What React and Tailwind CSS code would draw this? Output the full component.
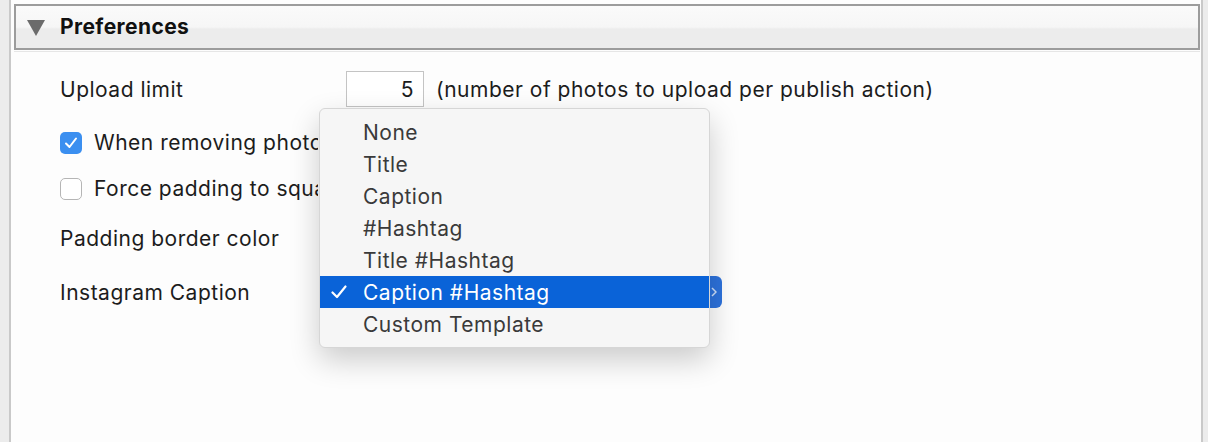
import React from "react";

const items = ["None", "Title", "Caption", "#Hashtag", "Title #Hashtag", "Caption #Hashtag", "Custom Template"];

export default function App() {
  return (
    <div
      className="relative flex h-[442px] w-[1208px] overflow-hidden bg-[#ececec] text-[#1c1c1c]"
      style={{ fontFamily: "Inter, 'Open Sans', sans-serif" }}
    >
      <div className="ml-[9px] flex w-[1194px] flex-col border-x-2 border-x-[#c9c9c9] bg-[#fdfdfd]">
        <div className="ml-[3px] mt-[4px] flex h-[46px] w-[1186px] items-center border-2 border-[#9c9c9c] bg-[linear-gradient(#fafafa,#f6f6f6_50%,#ececec_55%,#ececec)] pl-[10px]">
          <svg width="20" height="17" viewBox="0 0 20 17" className="mt-[1px]">
            <path d="M1 1 L19 1 L10 17 Z" fill="#6b6b6b" />
          </svg>
          <span className="ml-[14px] text-[21px] font-bold tracking-[0.4px] text-[#111]">Preferences</span>
        </div>
        <div className="ml-[3px] mt-[1px] h-px w-[1186px] bg-[#e6e6e6]" />

        <div className="flex flex-col pl-[49px] text-[21px] tracking-[0.5px]">
          <div className="mt-[19px] flex h-[36px] items-center">
            <span className="w-[286px] pt-[2px]">Upload limit</span>
            <div className="flex h-[36px] w-[78px] items-center justify-end border border-[#c4c4c4] bg-white pr-[9px] pt-[2px]">5</div>
            <span className="ml-[12px] pt-[2px]">(number of photos to upload per publish action)</span>
          </div>

          <div className="mt-[24px] flex h-[24px] items-center">
            <div className="flex h-[22px] w-[22px] shrink-0 items-center justify-center rounded-[5px] bg-[#3b8ff0]">
              <svg width="14" height="12" viewBox="0 0 14 12">
                <path d="M2 6.5 L5.5 10 L12 1.5" stroke="white" strokeWidth="2" fill="none" strokeLinecap="round" strokeLinejoin="round" />
              </svg>
            </div>
            <span className="ml-[12px] w-[224px] overflow-hidden whitespace-nowrap">When removing photos</span>
          </div>

          <div className="mt-[22px] flex h-[24px] items-center">
            <div className="h-[22px] w-[22px] shrink-0 rounded-[5px] border border-[#b5b5b5] bg-white" />
            <span className="ml-[12px] w-[224px] overflow-hidden whitespace-nowrap">Force padding to square</span>
          </div>

          <div className="mt-[26px] flex h-[24px] items-center">
            <span>Padding border color</span>
          </div>

          <div className="mt-[30px] flex h-[24px] items-center">
            <span>Instagram Caption</span>
          </div>
        </div>
      </div>

      <div className="absolute left-[690px] top-[276px] flex h-[32px] w-[32px] items-center justify-end rounded-[6px] bg-[#2d72dc] pr-[5px]">
        <svg width="6" height="12" viewBox="0 0 6 12">
          <path d="M1 2 L5 6 L1 10" stroke="#cfe0fb" strokeWidth="1.5" fill="none" />
        </svg>
      </div>

      <div className="absolute left-[319px] top-[108px] flex h-[240px] w-[391px] flex-col rounded-[6px] border border-[#d6d6d6] bg-[#f6f6f6] py-[7px] text-[21px] tracking-[0.5px] text-[#3a3a3a] shadow-[0_12px_30px_rgba(0,0,0,0.2)]">
        {items.map((it) => {
          const sel = it === "Caption #Hashtag";
          return (
            <div
              key={it}
              className={
                sel
                  ? "flex h-[32px] items-center bg-[#0a63d8] text-white"
                  : "flex h-[32px] items-center"
              }
            >
              <span className="flex w-[43px] justify-end pr-[16px]">
                {sel ? (
                  <svg width="16" height="14" viewBox="0 0 16 14">
                    <path d="M1.5 7.5 L6 12 L14.5 1.5" stroke="white" strokeWidth="2.2" fill="none" strokeLinecap="round" strokeLinejoin="round" />
                  </svg>
                ) : null}
              </span>
              <span className="pt-[1px]">{it}</span>
            </div>
          );
        })}
      </div>
    </div>
  );
}
